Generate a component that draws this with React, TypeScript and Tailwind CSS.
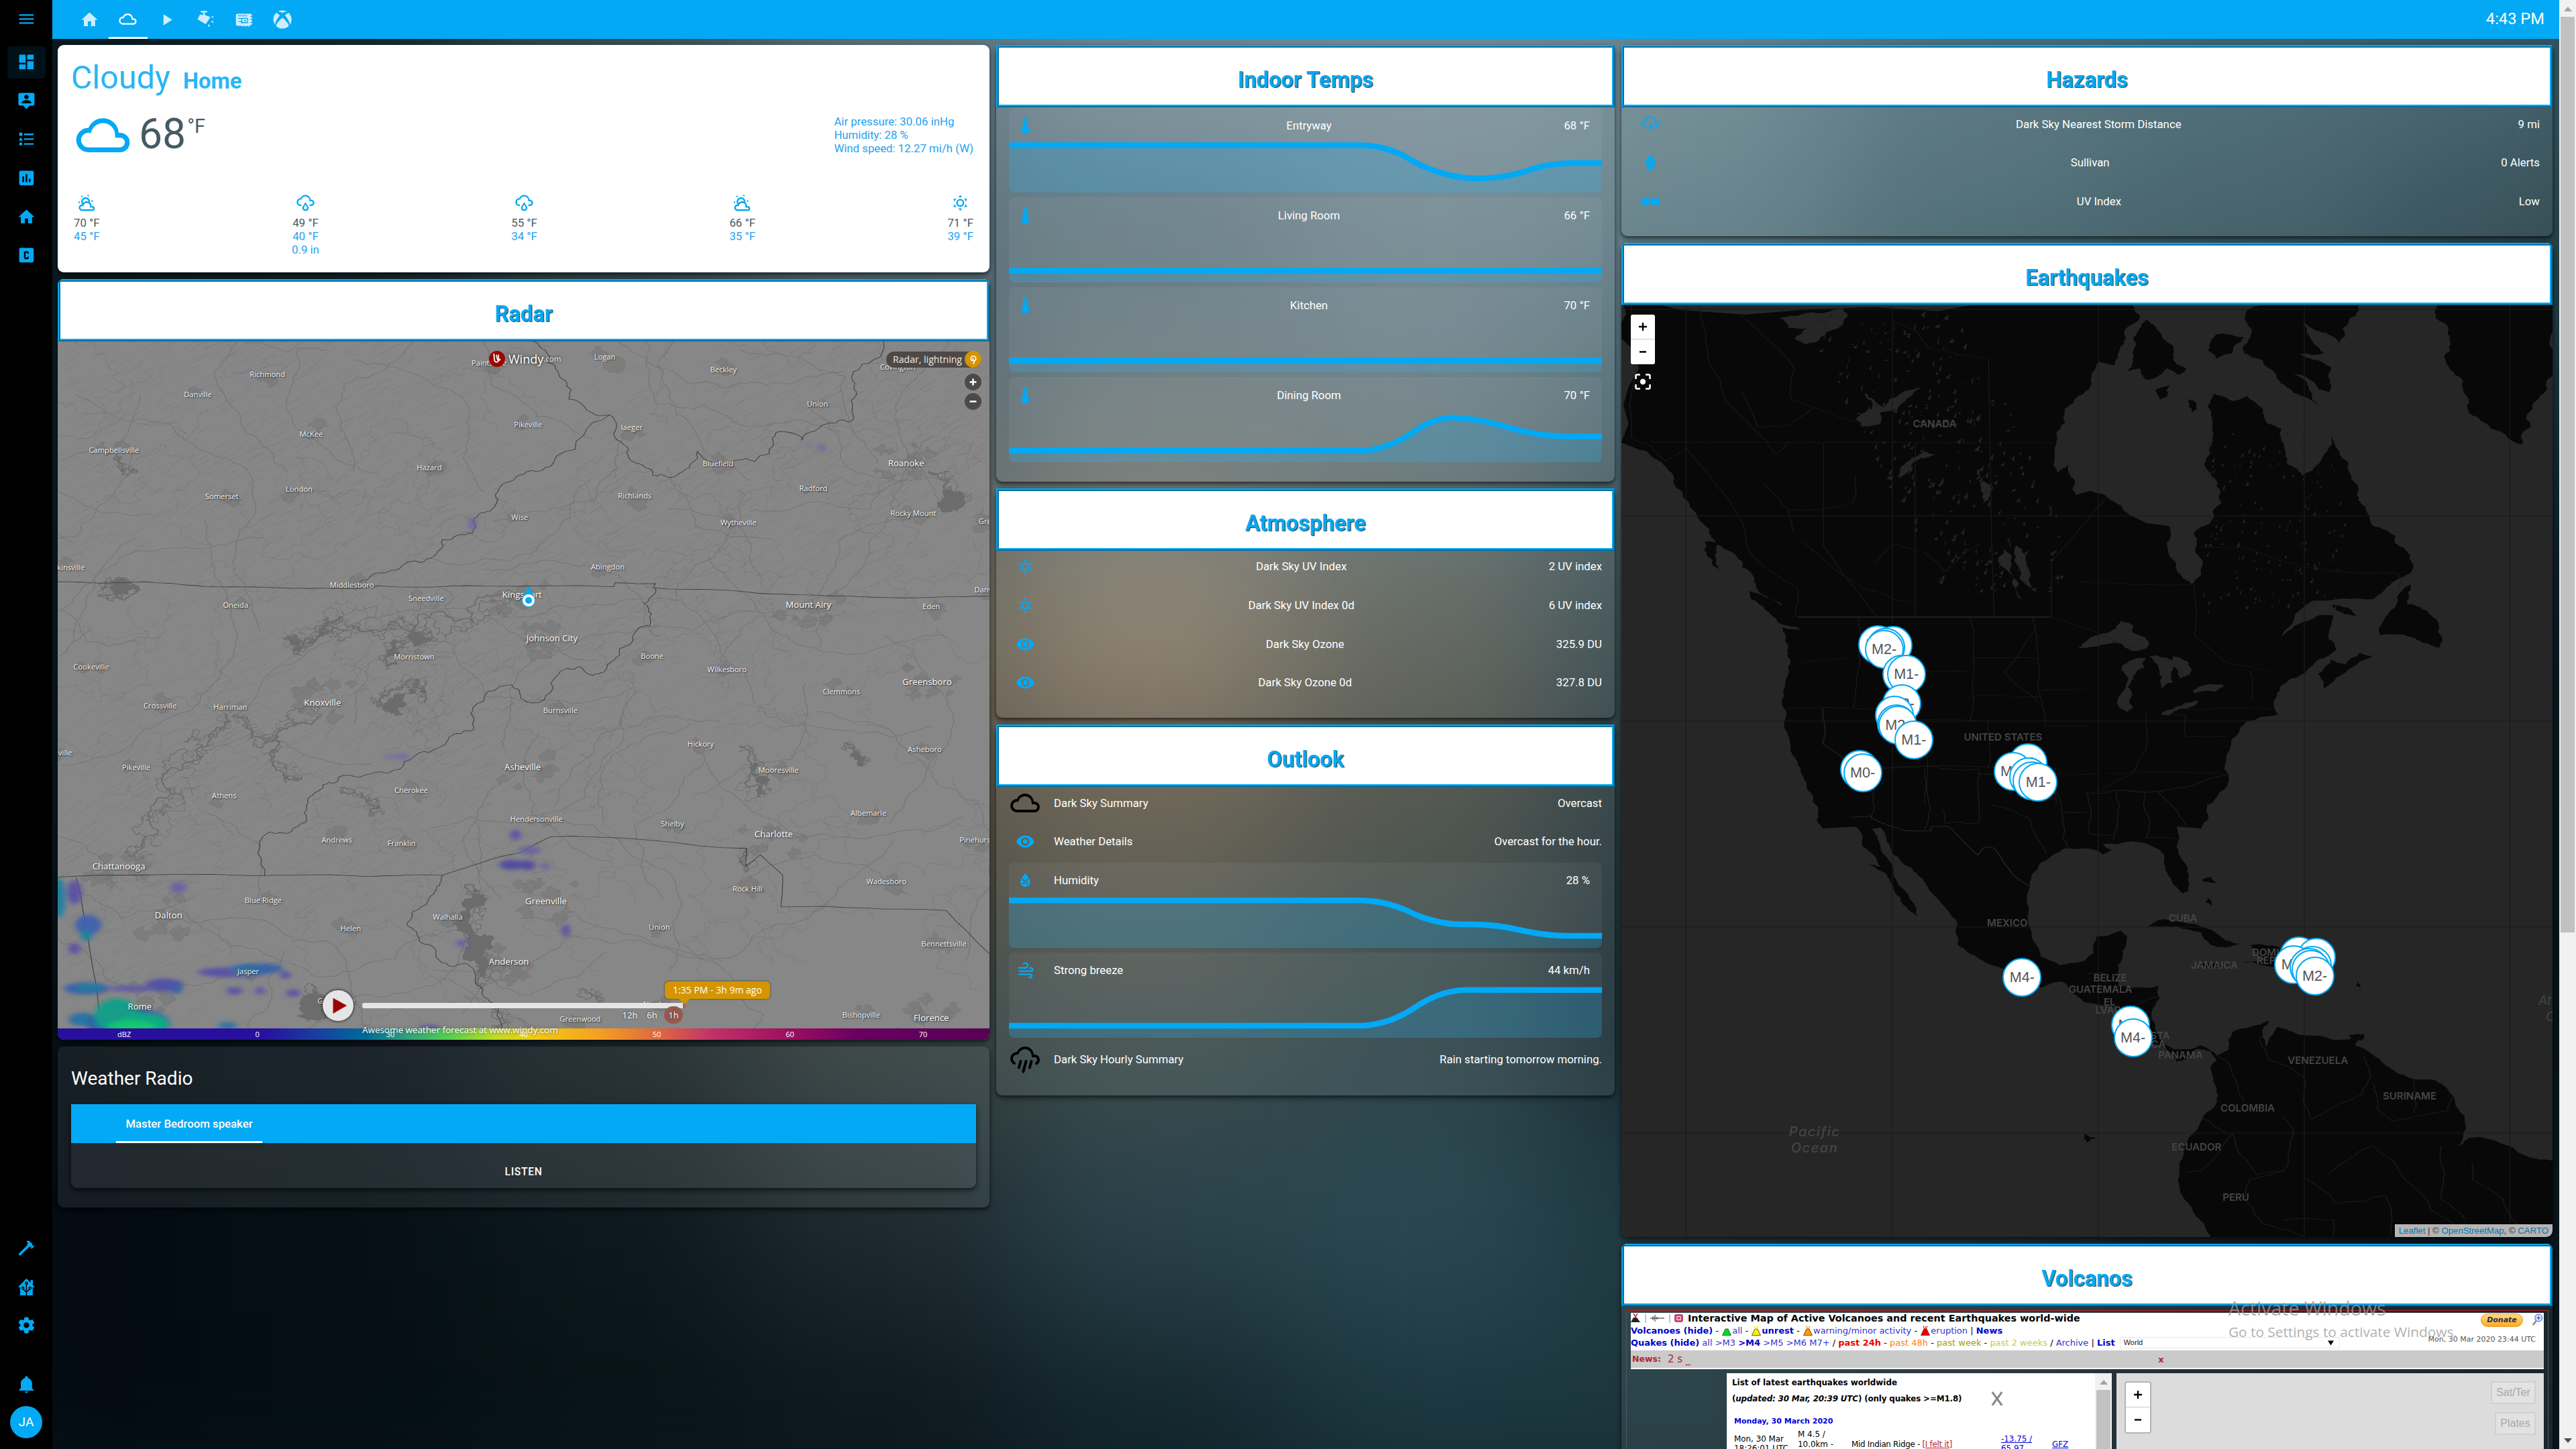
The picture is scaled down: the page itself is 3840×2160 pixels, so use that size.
import type { ReactNode } from "react";
import { FaXbox } from "react-icons/fa";

/* ---------- icon paths, 24 unit grid ---------- */
const CLOUD_OPEN =
  "M6,14A1,1 0 0,1 7,15A1,1 0 0,1 6,16A5,5 0 0,1 1,11A5,5 0 0,1 6,6C7,3.65 9.3,2 12,2C15.43,2 18.24,4.66 18.5,8.03L19,8A4,4 0 0,1 23,12A4,4 0 0,1 19,16H18A1,1 0 0,1 17,15A1,1 0 0,1 18,14H19A2,2 0 0,0 21,12A2,2 0 0,0 19,10H17V9A5,5 0 0,0 12,4C9.5,4 7.45,5.82 7.06,8.19C6.73,8.07 6.37,8 6,8A3,3 0 0,0 3,11A3,3 0 0,0 6,14";
const P = {
  menu: "M3,6H21V8H3V6M3,11H21V13H3V11M3,16H21V18H3V16Z",
  dash: "M13,3V9H21V3M13,21H21V11H13M3,21H11V15H3M3,13H11V3H3V13Z",
  person:
    "M20,2H4A2,2 0 0,0 2,4V16A2,2 0 0,0 4,18H8L12,22L16,18H20A2,2 0 0,0 22,16V4A2,2 0 0,0 20,2M12,4.3C13.5,4.3 14.7,5.5 14.7,7C14.7,8.5 13.5,9.7 12,9.7C10.5,9.7 9.3,8.5 9.3,7C9.3,5.5 10.5,4.3 12,4.3M18,15H6V14.1C6,12.1 10,11 12,11C14,11 18,12.1 18,14.1V15Z",
  list: "M5,9.5L7.5,14H2.5L5,9.5M3,4H7V8H3V4M5,20A2,2 0 0,0 7,18A2,2 0 0,0 5,16A2,2 0 0,0 3,18A2,2 0 0,0 5,20M9,5V7H21V5H9M9,19H21V17H9V19M9,13H21V11H9V13Z",
  chart:
    "M9 17H7V10H9V17M13 17H11V7H13V17M17 17H15V13H17V17M19 3H5A2 2 0 0 0 3 5V19A2 2 0 0 0 5 21H19A2 2 0 0 0 21 19V5A2 2 0 0 0 19 3Z",
  home: "M10,20V14H14V20H19V12H22L12,3L2,12H5V20H10Z",
  boxC: "M5,3H19A2,2 0 0,1 21,5V19A2,2 0 0,1 19,21H5A2,2 0 0,1 3,19V5A2,2 0 0,1 5,3M11,7A2,2 0 0,0 9,9V15A2,2 0 0,0 11,17H13A2,2 0 0,0 15,15V14H13V15H11V9H13V10H15V9A2,2 0 0,0 13,7H11Z",
  hammer:
    "M2,19.63L13.43,8.2L12.72,7.5L14.14,6.07L12,3.89C13.2,2.7 15.09,2.7 16.27,3.89L19.87,7.5L18.45,8.91H21.29L22,9.62L18.45,13.21L17.74,12.5V9.62L16.27,11.04L15.56,10.33L4.12,21.77L2,19.63Z",
  cog: "M12,15.5A3.5,3.5 0 0,1 8.5,12A3.5,3.5 0 0,1 12,8.5A3.5,3.5 0 0,1 15.5,12A3.5,3.5 0 0,1 12,15.5M19.43,12.97C19.47,12.65 19.5,12.33 19.5,12C19.5,11.67 19.47,11.34 19.43,11L21.54,9.37C21.73,9.22 21.78,8.95 21.66,8.73L19.66,5.27C19.54,5.05 19.27,4.96 19.05,5.05L16.56,6.05C16.04,5.66 15.5,5.32 14.87,5.07L14.5,2.42C14.46,2.18 14.25,2 14,2H10C9.75,2 9.54,2.18 9.5,2.42L9.13,5.07C8.5,5.32 7.96,5.66 7.44,6.05L4.95,5.05C4.73,4.96 4.46,5.05 4.34,5.27L2.34,8.73C2.21,8.95 2.27,9.22 2.46,9.37L4.57,11C4.53,11.34 4.5,11.67 4.5,12C4.5,12.33 4.53,12.65 4.57,12.97L2.46,14.63C2.27,14.78 2.21,15.05 2.34,15.27L4.34,18.73C4.46,18.95 4.73,19.03 4.95,18.95L7.44,17.94C7.96,18.34 8.5,18.68 9.13,18.93L9.5,21.58C9.54,21.82 9.75,22 10,22H14C14.25,22 14.46,21.82 14.5,21.58L14.87,18.93C15.5,18.67 16.04,18.34 16.56,17.94L19.05,18.95C19.27,19.03 19.54,18.95 19.66,18.73L21.66,15.27C21.78,15.05 21.73,14.78 21.54,14.63L19.43,12.97Z",
  bell: "M21,19V20H3V19L5,17V11C5,7.9 7.03,5.17 10,4.29C10,4.19 10,4.1 10,4A2,2 0 0,1 12,2A2,2 0 0,1 14,4C14,4.1 14,4.19 14,4.29C16.97,5.17 19,7.9 19,11V17L21,19M14,21A2,2 0 0,1 12,23A2,2 0 0,1 10,21",
  play: "M8,5.14V19.14L19,12.14L8,5.14Z",
  track:
    "M6,1H14V3H11V6L18,8.7L12.3,17.5L2,11.4L5,5.6L9,6V3H6V1M19.5,8L21.5,7.4L22,9L20,9.6L19.5,8M19.5,13.4L21.8,14.2L21.2,15.8L19,15L19.5,13.4M15,18.2L16.6,17.8L17.4,20.6L15.8,21L15,18.2Z",
  board:
    "M3.7,4.5H20.5A1.5,1.5 0 0,1 22,6V7.5H20.5V9H22.500V11H20.5V12.500H22.500V14.500H20.5V16H22.500V18H20.5V19.500H18.500V20.500H17V19.500H15V20.500H13.500V19.500H11.500V20.500H10V19.500H3.7A1.5,1.5 0 0,1 2.200,18V6A1.5,1.5 0 0,1 3.7,4.500M5,5.800V8H5.900V5.800H5M7,5.800V8H7.900V5.800H7M9,5.800V8H9.900V5.800H9M11,5.800V8H11.900V5.800H11M13,5.800V8H13.900V5.800H13M15,5.800V8H15.900V5.800H15M5,9.800V10.900H9V13.500H5.500V14.600H8.500V16.200H17.200V9.800H5M10.200,10.900H16.100V15.100H10.200V10.900M12.600,12V14H14.600V12H12.600Z",
  cloud:
    "M6,19A5,5 0 0,1 1,14A5,5 0 0,1 6,9C7,6.65 9.3,5 12,5C15.43,5 18.24,7.66 18.5,11.03L19,11A4,4 0 0,1 23,15A4,4 0 0,1 19,19H6M19,13H17V12A5,5 0 0,0 12,7C9.5,7 7.45,8.82 7.06,11.19C6.73,11.07 6.37,11 6,11A3,3 0 0,0 3,14A3,3 0 0,0 6,17H19A2,2 0 0,0 21,15A2,2 0 0,0 19,13Z",
  partly:
    "M12.74,5.47C15.1,6.5 16.35,9.03 15.92,11.46C17.19,12.56 18,14.19 18,16V16.17C18.31,16.06 18.65,16 19,16A3,3 0 0,1 22,19A3,3 0 0,1 19,22H6A4,4 0 0,1 2,18A4,4 0 0,1 6,14H6.27C5,12.45 4.6,10.24 5.5,8.26C6.72,5.5 9.97,4.24 12.74,5.47M11.93,7.3C10.16,6.5 8.09,7.31 7.31,9.07C6.85,10.09 6.93,11.22 7.41,12.13C8.5,10.83 10.16,10 12,10C12.7,10 13.38,10.12 14,10.34C13.94,9.06 13.18,7.86 11.93,7.3M13.55,3.64C13,3.4 12.45,3.23 11.88,3.12L14.37,1.82L15.27,4.71C14.76,4.29 14.19,3.93 13.55,3.64M6.09,4.44C5.6,4.79 5.17,5.19 4.8,5.63L4.91,2.82L7.87,3.5C7.25,3.71 6.65,4.03 6.09,4.44M18,9.71C17.91,9.12 17.78,8.55 17.59,8L19.97,9.5L17.92,11.73C18.03,11.08 18.05,10.4 18,9.71M3.04,11.3C3.11,11.9 3.24,12.47 3.43,13L1.06,11.5L3.1,9.28C3,9.93 2.97,10.61 3.04,11.3M19,18H16V16A4,4 0 0,0 12,12A4,4 0 0,0 8,16H6A2,2 0 0,0 4,18A2,2 0 0,0 6,20H19A1,1 0 0,0 20,19A1,1 0 0,0 19,18Z",
  rainy:
    CLOUD_OPEN +
    "M14.83,15.67C16.39,17.23 16.39,19.5 14.83,21.08C14.05,21.86 13,22 12,22C11,22 9.95,21.86 9.17,21.08C7.61,19.5 7.61,17.23 9.17,15.67L12,11L14.83,15.67M13.41,16.69L12,14.25L10.59,16.69C9.8,17.5 9.8,18.7 10.59,19.5C11,19.93 11.5,20 12,20C12.5,20 13,19.93 13.41,19.5C14.2,18.7 14.2,17.5 13.41,16.69Z",
  lightning: CLOUD_OPEN + "M12,11H15L13,15H15L11.25,22L12,17H9.5L12,11Z",
  sunny:
    "M12,7A5,5 0 0,1 17,12A5,5 0 0,1 12,17A5,5 0 0,1 7,12A5,5 0 0,1 12,7M12,9A3,3 0 0,0 9,12A3,3 0 0,0 12,15A3,3 0 0,0 15,12A3,3 0 0,0 12,9M12,2L14.39,5.42C13.65,5.15 12.84,5 12,5C11.16,5 10.35,5.15 9.61,5.42L12,2M3.34,7L7.5,6.65C6.9,7.16 6.36,7.78 5.94,8.5C5.5,9.24 5.25,10 5.11,10.79L3.34,7M3.36,17L5.12,13.23C5.26,14 5.53,14.78 5.95,15.5C6.37,16.24 6.91,16.86 7.5,17.37L3.36,17M20.65,7L18.88,10.79C18.74,10 18.47,9.23 18.05,8.5C17.63,7.78 17.1,7.15 16.5,6.64L20.65,7M20.64,17L16.5,17.36C17.09,16.85 17.62,16.22 18.04,15.5C18.46,14.77 18.73,14 18.87,13.21L20.64,17M12,22L9.59,18.56C10.33,18.83 11.14,19 12,19C12.82,19 13.63,18.83 14.37,18.56L12,22Z",
  pouring:
    "M9,12C9.53,12.14 9.85,12.69 9.71,13.22L8.41,18.05C8.27,18.59 7.72,18.9 7.19,18.76C6.65,18.62 6.34,18.07 6.5,17.54L7.78,12.71C7.92,12.17 8.47,11.86 9,12M13,12C13.53,12.14 13.85,12.69 13.71,13.22L11.64,20.95C11.5,21.5 10.95,21.8 10.41,21.66C9.88,21.5 9.56,20.97 9.7,20.43L11.78,12.71C11.92,12.17 12.47,11.86 13,12M17,12C17.53,12.14 17.85,12.69 17.71,13.22L16.41,18.05C16.27,18.59 15.72,18.9 15.19,18.76C14.65,18.62 14.34,18.07 14.5,17.54L15.78,12.71C15.92,12.17 16.47,11.86 17,12M17,10V9A5,5 0 0,0 12,4C9.5,4 7.45,5.82 7.06,8.19C6.73,8.07 6.37,8 6,8A3,3 0 0,0 3,11C3,12.11 3.6,13.08 4.5,13.6V13.59C5,13.87 5.14,14.5 4.87,14.96C4.59,15.43 4,15.6 3.5,15.32V15.33C2,14.47 1,12.85 1,11A5,5 0 0,1 6,6C7,3.65 9.3,2 12,2C15.43,2 18.24,4.66 18.5,8.03L19,8A4,4 0 0,1 23,12C23,13.5 22.2,14.77 21,15.46V15.46C20.5,15.73 19.91,15.57 19.63,15.09C19.36,14.61 19.5,14 20,13.72V13.73C20.6,13.39 21,12.74 21,12A2,2 0 0,0 19,10H17Z",
  windy:
    "M4,10A1,1 0 0,1 3,9A1,1 0 0,1 4,8H12A2,2 0 0,0 14,6A2,2 0 0,0 12,4C11.45,4 10.95,4.22 10.59,4.59C10.2,5 9.56,5 9.17,4.59C8.78,4.2 8.78,3.56 9.17,3.17C9.9,2.45 10.9,2 12,2A4,4 0 0,1 16,6A4,4 0 0,1 12,10H4M19,12A1,1 0 0,0 20,11A1,1 0 0,0 19,10C18.72,10 18.47,10.11 18.29,10.29C17.9,10.68 17.27,10.68 16.88,10.29C16.5,9.9 16.5,9.27 16.88,8.88C17.42,8.34 18.17,8 19,8A3,3 0 0,1 22,11A3,3 0 0,1 19,14H5A1,1 0 0,1 4,13A1,1 0 0,1 5,12H19M18,18H4A1,1 0 0,1 3,17A1,1 0 0,1 4,16H18A3,3 0 0,1 21,19A3,3 0 0,1 18,22C17.17,22 16.42,21.66 15.88,21.12C15.5,20.73 15.5,20.1 15.88,19.71C16.27,19.32 16.9,19.32 17.29,19.71C17.47,19.89 17.72,20 18,20A1,1 0 0,0 19,19A1,1 0 0,0 18,18Z",
  eye: "M12,9A3,3 0 0,0 9,12A3,3 0 0,0 12,15A3,3 0 0,0 15,12A3,3 0 0,0 12,9M12,17A5,5 0 0,1 7,12A5,5 0 0,1 12,7A5,5 0 0,1 17,12A5,5 0 0,1 12,17M12,4.5C7,4.5 2.73,7.61 1,12C2.73,16.39 7,19.5 12,19.5C17,19.5 21.27,16.39 23,12C21.27,7.61 17,4.5 12,4.5Z",
  thermo:
    "M15 13V5A3 3 0 0 0 9 5V13A5 5 0 1 0 15 13M12 4A1 1 0 0 1 13 5V8H11V5A1 1 0 0 1 12 4Z",
  water:
    "M12,3.25C12,3.25 6,10 6,14C6,17.32 8.69,20 12,20A6,6 0 0,0 18,14C18,10 12,3.25 12,3.25M14.47,9.97L15.53,11.03L9.53,17.03L8.47,15.97M9.75,10A1.25,1.25 0 0,1 11,11.25A1.25,1.25 0 0,1 9.75,12.5A1.25,1.25 0 0,1 8.5,11.25A1.25,1.25 0 0,1 9.75,10M14.25,14.5A1.25,1.25 0 0,1 15.5,15.75A1.25,1.25 0 0,1 14.25,17A1.25,1.25 0 0,1 13,15.75A1.25,1.25 0 0,1 14.25,14.5Z",
  hurricane:
    "M15,6.79C16.86,7.86 18,9.85 18,12C18,22 6,22 6,22C7.25,21.06 8.38,19.95 9.34,18.71C9.38,18.66 9.41,18.61 9.44,18.55C9.69,18.06 9.5,17.46 9,17.21C7.14,16.14 6,14.15 6,12C6,2 18,2 18,2C16.75,2.94 15.62,4.05 14.66,5.29C14.62,5.34 14.59,5.39 14.56,5.45C14.31,5.94 14.5,6.54 15,6.79M12,14A2,2 0 0,0 14,12A2,2 0 0,0 12,10A2,2 0 0,0 10,12A2,2 0 0,0 12,14Z",
  shades:
    "M7,17H4C2.38,17 0.96,15.74 0.76,14.14L0.26,11.15C0.15,10.3 0.39,9.5 0.91,8.92C1.43,8.34 2.19,8 3,8H9C9.83,8 10.58,8.35 11.06,8.96C11.17,9.11 11.27,9.27 11.35,9.45C11.78,9.36 12.22,9.36 12.64,9.45C12.72,9.27 12.82,9.11 12.94,8.96C13.41,8.35 14.16,8 15,8H21C21.81,8 22.57,8.34 23.09,8.92C23.6,9.5 23.84,10.3 23.74,11.11L23.23,14.18C23.04,15.74 21.61,17 20,17H17C15.44,17 13.92,15.81 13.54,14.3L12.64,11.59C12.26,11.31 11.73,11.31 11.35,11.59L10.43,14.37C10.07,15.82 8.56,17 7,17Z",
};
type IconName = keyof typeof P;

function Icon({ n, className = "size-[28.8px]" }: { n: IconName; className?: string }) {
  return (
    <svg viewBox="0 0 24 24" className={className} fill="currentColor" fillRule="evenodd">
      <path d={P[n]} />
    </svg>
  );
}

function HaIcon() {
  return (
    <svg viewBox="0 0 24 24" className="size-[28.8px]">
      <path fill="currentColor" d="M12 1.5 22.5 12.5H19.8V22.5H4.2V12.5H1.5Z" />
      <path fill="currentColor" d="M17 3.5H20V9H17Z" />
      <g stroke="#000" strokeWidth="1.2" fill="none">
        <path d="M12 22.5V8M12 18.5 7.5 14.5M12 18.5 16.5 14.5" />
        <circle cx="12" cy="7.5" r="1.4" />
        <circle cx="7.5" cy="13.5" r="1.4" />
        <circle cx="16.5" cy="13.5" r="1.4" />
      </g>
    </svg>
  );
}

/* ---------- procedural terrain helpers ---------- */
type Pt = [number, number];
function rng(seed: number) {
  let s = seed >>> 0;
  return () => {
    s = (s * 1664525 + 1013904223) >>> 0;
    return s / 4294967296;
  };
}
function parse(str: string): Pt[] {
  return str
    .trim()
    .split(/\s+/)
    .map((p) => p.split(",").map(Number) as Pt);
}
/** Midpoint displacement, turns a coarse outline into a ragged one. */
function jag(str: string, amp = 0.12, levels = 3, close = false, seed = 7) {
  const r = rng(seed);
  let pts = parse(str);
  if (close) pts = [...pts, pts[0]];
  for (let l = 0; l < levels; l++) {
    const out: Pt[] = [pts[0]];
    for (let i = 1; i < pts.length; i++) {
      const [x0, y0] = pts[i - 1];
      const [x1, y1] = pts[i];
      const k = (r() - 0.5) * 2 * amp;
      out.push([(x0 + x1) / 2 - (y1 - y0) * k, (y0 + y1) / 2 + (x1 - x0) * k], [x1, y1]);
    }
    pts = out;
  }
  return "M" + pts.map(([x, y]) => x.toFixed(1) + " " + y.toFixed(1)).join("L") + (close ? "Z" : "");
}

/* ---------- page background ---------- */
const BG = [
  ["#0a1a21", "#15272e", "#3b5058", "#5f7680", "#768e98", "#7c939d", "#6f8a93", "#55747f", "#476872", "#3f5f6a"],
  ["#0a1a21", "#12232a", "#33474e", "#4f6772", "#5c737e", "#6b818c", "#5f7c86", "#46666f", "#3a5963", "#2c4751"],
  ["#0a1920", "#12222a", "#2e3f44", "#4f6066", "#6a7678", "#65787e", "#46616a", "#2c4751", "#1d3640", "#142c36"],
  ["#091820", "#111f26", "#313c3e", "#625d50", "#887c69", "#5c6058", "#30464d", "#1c3139", "#122229", "#0a1a22"],
  ["#08161d", "#0e1b22", "#222d32", "#4a463b", "#5f5747", "#454942", "#20333a", "#14262d", "#0c1a21", "#08151c"],
  ["#060f16", "#0c151c", "#1b2429", "#33403f", "#3f4e4d", "#2f4549", "#16282f", "#102127", "#0b181f", "#07131a"],
  ["#040b12", "#050f15", "#0c181d", "#1e2a2f", "#2a424b", "#2b4852", "#1e373f", "#1c3138", "#131f27", "#0a151d"],
  ["#040b12", "#040e14", "#081318", "#0d181e", "#14262d", "#1c3740", "#1d373e", "#1b2d33", "#121b23", "#0a151d"],
];

function Backdrop() {
  return (
    <div className="absolute inset-0 overflow-hidden bg-[#0a1a21]">
      <div className="absolute -inset-[100px] grid grid-cols-10 grid-rows-8 blur-[110px]">
        {BG.flat().map((c, i) => (
          <div key={i} style={{ backgroundColor: c }} />
        ))}
      </div>
    </div>
  );
}

/* ---------- shared card parts ---------- */
const SHADOW = "shadow-[0_4px_8px_rgba(0,0,0,0.45),0_2px_4px_rgba(0,0,0,0.3)]";

function Card({ className = "", children }: { className?: string; children: ReactNode }) {
  return <section className={`flex shrink-0 flex-col rounded-[9px] bg-white/[0.07] ${SHADOW} ${className}`}>{children}</section>;
}

function Heading({ children }: { children: ReactNode }) {
  return (
    <h2 className="flex h-[93px] w-full shrink-0 items-center justify-center border-4 border-[#03a9f4] bg-white pt-[12px] text-[32.65px] leading-none font-bold text-[#03a9f4] [border-style:ridge] [text-shadow:1px_1px_1px_#1f3a4a]">
      {children}
    </h2>
  );
}

function Row({ icon, name, value, left, big, inset }: { icon: IconName; name: string; value: string; left?: boolean; big?: boolean; inset?: boolean }) {
  return (
    <div className={`flex h-12 items-center text-[16.8px] leading-none text-white ${inset ? "pr-[18px]" : ""}`}>
      <div className={`flex w-12 justify-center ${big ? "text-black" : "text-[#03a9f4]"}`}>
        <Icon n={icon} className={big ? "size-12 shrink-0" : "size-[28.8px]"} />
      </div>
      <div className={`ml-[19px] flex-1 ${left ? "text-left" : "text-center"}`}>{name}</div>
      <div>{value}</div>
    </div>
  );
}

function GraphCard({ d, ...row }: { d: string; icon: IconName; name: string; value: string; left?: boolean }) {
  return (
    <div className="relative h-[127px] overflow-hidden rounded-[8px] bg-white/[0.05]">
      <svg viewBox="0 0 884 127" className="absolute inset-0 size-full">
        <path d={`${d}V127H0Z`} fill="#03a9f4" fillOpacity="0.2" />
        <path d={d} fill="none" stroke="#03a9f4" strokeWidth="8.6" />
      </svg>
      <div className="relative pt-[3px]">
        <Row {...row} inset />
      </div>
    </div>
  );
}

/* ---------- sidebar and header ---------- */
function Sidebar() {
  const top: IconName[] = ["dash", "person", "list", "chart", "home", "boxC"];
  return (
    <aside className="relative flex w-[78px] shrink-0 flex-col items-center bg-black text-[#03a9f4]">
      <div className="flex h-[57.6px] items-center">
        <Icon n="menu" />
      </div>
      <nav className="mt-[11px] flex flex-col gap-[9.6px]">
        {top.map((n, i) => (
          <div key={n} className={`flex h-12 w-[57px] items-center justify-center rounded-[5px] ${i === 0 ? "bg-[#00111a]" : ""}`}>
            <Icon n={n} />
          </div>
        ))}
      </nav>
      <div className="mt-auto flex flex-col items-center pb-[16px]">
        <div className="flex h-[57.6px] items-center">
          <Icon n="hammer" />
        </div>
        <div className="flex h-[57.6px] items-center">
          <HaIcon />
        </div>
        <div className="flex h-[57.6px] items-center">
          <Icon n="cog" />
        </div>
        <div className="mt-[30px] flex h-[57.6px] items-center">
          <Icon n="bell" />
        </div>
        <div className="mt-[4px] flex size-12 items-center justify-center rounded-full bg-[#03a9f4] text-[19.2px] text-white">JA</div>
      </div>
    </aside>
  );
}

function Header() {
  const tabs: IconName[] = ["home", "cloud", "play", "track", "board"];
  return (
    <header className="flex h-[58px] shrink-0 items-center bg-[#03a9f4] pr-[22px] pl-[26.5px] text-white">
      {tabs.map((n, i) => (
        <div key={n} className={`flex h-full w-[57.6px] items-center justify-center ${i === 1 ? "border-b-[3px] border-white pt-[2px]" : "text-white/80"}`}>
          <Icon n={n} />
        </div>
      ))}
      <div className="flex h-full w-[57.6px] items-center justify-center text-white/80">
        <FaXbox className="size-[28px]" />
      </div>
      <div className="ml-auto text-[23.7px] leading-none">4:43 PM</div>
    </header>
  );
}

/* ---------- column one ---------- */
const DAYS: { icon: IconName; hi: string; lo: string; rain?: string }[] = [
  { icon: "partly", hi: "70 °F", lo: "45 °F" },
  { icon: "rainy", hi: "49 °F", lo: "40 °F", rain: "0.9 in" },
  { icon: "rainy", hi: "55 °F", lo: "34 °F" },
  { icon: "partly", hi: "66 °F", lo: "35 °F" },
  { icon: "sunny", hi: "71 °F", lo: "39 °F" },
];

function WeatherCard() {
  return (
    <section className={`flex h-[339px] shrink-0 flex-col rounded-[9px] bg-white pr-[24px] pl-[24px] ${SHADOW}`}>
      <div className="-ml-[4px] flex items-baseline pt-[20px] leading-[58px] text-[#29b6f6]">
        <span className="text-[48.5px]">Cloudy</span>
        <span className="ml-[19px] text-[32.6px] font-bold">Home</span>
      </div>
      <div className="mt-[17px] flex h-[74px]">
        <Icon n="cloud" className="-mt-[9px] size-[87px] shrink-0 text-[#03a9f4]" />
        <div className="ml-[10px] flex text-[#455a64]">
          <span className="text-[62.4px] leading-[66px]">68</span>
          <span className="ml-[2px] text-[28.8px] leading-[42px]">°F</span>
        </div>
        <div className="ml-auto pt-[4px] text-[16.8px] leading-[20px] text-[#1fa2f0]">
          <div>Air pressure: 30.06 inHg</div>
          <div>Humidity: 28 %</div>
          <div>Wind speed: 12.27 mi/h (W)</div>
        </div>
      </div>
      <div className="mt-[47px] flex justify-between text-[16.8px] leading-[20px] text-[#1fa2f0]">
        {DAYS.map((d, i) => (
          <div key={i} className="flex flex-col items-center">
            <Icon n={d.icon} className="mb-[5px] size-[28.8px] text-[#03a9f4]" />
            <span className="text-[#455a64]">{d.hi}</span>
            <span>{d.lo}</span>
            {d.rain && <span>{d.rain}</span>}
          </div>
        ))}
      </div>
    </section>
  );
}

const CITIES: [string, number, number, number?][] = [
  ["Richmond", 357, 86], ["Danville", 241, 130], ["McKee", 430, 217], ["Campbellsville", 101, 252], ["London", 410, 339],
  ["Somerset", 281, 355], ["Hazard", 627, 291], ["Paintsville", 727, 60], ["Logan", 920, 47], ["Beckley", 1118, 75],
  ["Covington", 1409, 69], ["Union", 1275, 151], ["Pikeville", 792, 197], ["Iaeger", 965, 203], ["Bluefield", 1109, 283],
  ["Roanoke", 1423, 282, 1], ["Radford", 1268, 337], ["Richlands", 970, 353], ["Wise", 778, 401], ["Wytheville", 1143, 412],
  ["Rocky Mount", 1435, 392], ["Abingdon", 925, 510], ["Middlesboro", 498, 550], ["Sneedville", 622, 580], ["Oneida", 304, 595],
  ["Kingsport", 782, 572, 1], ["Mount Airy", 1260, 594, 1], ["Eden", 1465, 598], ["Johnson City", 832, 668, 1], ["Morristown", 602, 709],
  ["Boone", 999, 707], ["Cookeville", 63, 730], ["Wilkesboro", 1124, 736], ["Greensboro", 1458, 764, 1], ["Clemmons", 1315, 785],
  ["Crossville", 178, 816], ["Harriman", 295, 820], ["Knoxville", 449, 810, 1], ["Burnsville", 846, 827], ["Hickory", 1080, 900],
  ["Asheboro", 1454, 912], ["Pikeville", 138, 952], ["Asheville", 783, 952, 1], ["Mooresville", 1210, 959], ["Cherokee", 597, 1003],
  ["Athens", 285, 1015], ["Albemarle", 1360, 1053], ["Hendersonville", 806, 1066], ["Shelby", 1033, 1076], ["Charlotte", 1202, 1101, 1],
  ["Andrews", 473, 1112], ["Franklin", 581, 1119], ["Chattanooga", 109, 1172, 1], ["Wadesboro", 1390, 1204], ["Rock Hill", 1158, 1220],
  ["Blue Ridge", 350, 1245], ["Greenville", 822, 1248, 1], ["Dalton", 192, 1280, 1], ["Walhalla", 658, 1283], ["Helen", 496, 1308],
  ["Union", 1011, 1304], ["Bennettsville", 1486, 1342], ["Anderson", 760, 1382, 1], ["Jasper", 325, 1402], ["Rome", 144, 1481, 1],
  ["Gainesville", 472, 1467], ["Newberry", 1013, 1475], ["Greenwood", 879, 1507], ["Bishopville", 1348, 1498], ["Florence", 1465, 1505, 1],
  ["Hopkinsville", 17, 512], ["McMinnville", -4, 920], ["Danville", 1560, 560], ["Gretna", 1564, 410], ["Pinehurst", 1540, 1112],
];

const BORDERS = [
  "7,543 80,546 150,543 220,550 350,555 510,557 545,552 780,553 935,554 937,545 1005,547 1000,556 1200,570 1370,577 1562,575",
  "510,545 560,520 590,500 640,480 650,450 700,435 715,390 740,370 745,335 790,300 840,265 928,175",
  "928,175 860,140 855,100 825,60 800,13",
  "928,175 940,230 960,270 1000,308 1050,300 1075,255 1090,275 1140,275 1195,260 1205,215 1250,230 1290,195 1330,190 1340,130 1335,80 1385,13",
  "1005,555 985,590 995,640 970,655 945,690 920,740 900,750 880,730 840,750 800,810 780,800 765,770 700,820 700,870 660,885 640,910 585,940 555,965 485,970 450,990 425,1030 420,1075 395,1095 360,1095 352,1192",
  "7,1194 525,1193 650,1190 730,1155 780,1140 830,1105 1157,1131 1155,1170 1180,1145 1217,1190 1214,1260 1490,1268 1562,1363",
  "650,1190 640,1215 600,1270 590,1300 610,1335 630,1345 660,1390 700,1395 720,1460 740,1500 745,1553",
  "38,1196 78,1528",
];
const RIVERS = [
  "80,560 100,540 130,545 145,560 110,580 75,575", "385,670 410,690 450,660 480,620 440,640", "400,700 440,665 500,640 560,635 600,650 700,630 760,560",
  "540,820 570,780 610,760 620,810", "555,730 585,680 630,650", "290,835 260,880 230,940 190,1000 160,1060 150,1110 130,1150",
  "300,840 330,880 370,890 365,940 385,975 415,975", "370,890 400,860 440,840", "480,1010 520,1020 545,1040 530,1060", "690,1210 695,1260 700,1320 720,1380 715,1440",
  "1145,905 1165,950 1185,1010", "1320,900 1340,930 1360,940", "1155,1130 1145,1160 1160,1180", "1460,300 1500,350 1520,370", "100,270 115,300 140,300",
  "740,1480 745,1553", "430,1430 425,1500", "880,1440 905,1480",
];
/* reservoirs that show as solid dark patches */
const POOLS = [
  "400,660 412,690 402,705 392,670", "560,800 590,790 622,760 618,790 590,812 560,830 545,815", "585,670 605,655 632,660 600,680 570,715 555,740 560,705",
  "1165,950 1178,945 1192,985 1190,1010 1180,1018 1172,985", "690,1270 702,1220 706,1260 700,1310 712,1370 722,1400 712,1440 704,1400 690,1330",
  "1480,345 1505,345 1522,368 1500,388 1482,362", "412,1480 440,1440 450,1480 425,1515", "1330,930 1345,920 1350,950", "95,560 110,535 135,548 120,572",
];
const BLOBS: [number, number, number, number, string][] = [
  [8, 1240, 12, 44, "#1f7fa0"], [35, 1228, 12, 26, "#5a4fa8"], [58, 1300, 22, 22, "#3f5fae"], [55, 1322, 10, 14, "#2080a0"], [35, 1352, 10, 12, "#5a4fa8"],
  [208, 1217, 14, 12, "#6a60a8"], [300, 1404, 60, 11, "#574fa8"], [340, 1396, 44, 11, "#3460ac"], [322, 1402, 26, 6, "#1f80a0"], [387, 1410, 10, 8, "#5a4fa8"],
  [185, 1432, 32, 14, "#514fa8"], [205, 1440, 10, 12, "#3a60a8"], [55, 1440, 38, 13, "#3460a8"], [60, 1438, 22, 7, "#1f80a0"], [130, 1440, 40, 7, "#6058a8"],
  [302, 1445, 14, 8, "#5a4fa8"], [345, 1445, 10, 8, "#6058a8"], [400, 1450, 12, 8, "#5a4fa8"], [125, 1518, 70, 36, "#2a62a8"], [106, 1500, 38, 38, "#12a088"],
  [150, 1520, 42, 24, "#10b080"], [130, 1525, 40, 14, "#18c86c"], [48, 1508, 22, 14, "#2a62a8"], [46, 1508, 12, 8, "#1f80a0"], [290, 1522, 16, 8, "#2a70a8"], [583, 928, 10, 6, "#6058a8"],
  [571, 928, 24, 5, "#7770a0"], [771, 1101, 9, 11, "#5a4fa8"], [765, 1167, 22, 11, "#5048a0"], [792, 1168, 12, 11, "#5048a0"], [820, 1170, 8, 8, "#6a62a0"],
  [795, 1135, 18, 10, "#6a62a0"], [855, 1312, 7, 14, "#5a50a0"], [680, 1340, 8, 8, "#6058a8"], [628, 1527, 18, 6, "#5a4fa8"], [699, 415, 6, 14, "#6a62a0"],
  [1282, 247, 6, 8, "#6a62a0"], [1260, 243, 8, 4, "#7770a0"],
];

function terrain() {
  const r = rng(42);
  let ridges = "";
  for (let i = 0; i < 9000; i++) {
    const x = 7 + r() * 1555;
    const y = 13 + r() * 1515;
    // the mountain belt runs from the lower left to the upper right
    const belt = Math.abs(y - (1250 - x * 0.72));
    if (belt > 420 * (0.4 + r() * 0.9) && !(x < 700 && y < 600 && r() < 0.8)) continue;
    const l = 6 + r() * 20;
    ridges += `M${x.toFixed(0)} ${y.toFixed(0)}q${(l * 0.4).toFixed(1)} ${(-l * 0.2 - r() * 4).toFixed(1)} ${l.toFixed(1)} ${(-l * (0.5 + r() * 0.5)).toFixed(1)}`;
  }
  const roads: string[] = [];
  const counties: string[] = [];
  for (let i = 0; i < 64; i++) {
    const x = 20 + r() * 1520;
    const y = 20 + r() * 1500;
    const a = r() * 6.28;
    const l = 120 + r() * 240;
    roads.push(jag(`${x},${y} ${x + Math.cos(a) * l},${y + Math.sin(a) * l} ${x + Math.cos(a + 0.5) * l * 1.8},${y + Math.sin(a + 0.5) * l * 1.8}`, 0.14, 5, false, i + 3));
  }
  for (let i = 0; i < 110; i++) {
    const x = r() * 1560;
    const y = r() * 1540;
    const a = r() * 6.28;
    const l = 60 + r() * 110;
    counties.push(jag(`${x},${y} ${x + Math.cos(a) * l},${y + Math.sin(a) * l} ${x + Math.cos(a + 0.9) * l * 1.6},${y + Math.sin(a + 0.9) * l * 1.6}`, 0.4, 5, false, i + 300));
  }
  let towns = "";
  for (const [, x, y, big] of CITIES) {
    const n = big ? 9 : 2;
    for (let k = 0; k < n; k++) {
      const cx = x + (r() - 0.5) * (big ? 100 : 34);
      const cy = y + (r() - 0.5) * (big ? 90 : 34);
      const s = 6 + r() * 12;
      towns += jag(`${cx - s},${cy} ${cx},${cy - s} ${cx + s},${cy} ${cx},${cy + s}`, 0.35, 3, true, Math.floor(cx));
    }
  }
  return { ridges, roads: roads.join(""), counties: counties.join(""), towns };
}
const TERRAIN = terrain();
const pctX = (x: number) => `${((x - 7) / 1555) * 100}%`;
const pctY = (y: number) => `${((y - 13) / 1540) * 100}%`;

function RadarMap() {
  return (
    <div className="relative flex-1 overflow-hidden rounded-b-[9px] bg-[#878787] font-['Open_Sans',sans-serif] text-white">
      <svg viewBox="7 13 1555 1540" preserveAspectRatio="none" className="absolute inset-0 size-full" fill="none">
        <defs>
          <filter id="soft" x="-50%" y="-50%" width="200%" height="200%">
            <feGaussianBlur stdDeviation="5" />
          </filter>
        </defs>
        <path d={TERRAIN.ridges} stroke="#777" strokeWidth="1" strokeOpacity="0.6" />
        <path d={TERRAIN.towns} fill="#7d7d7d" stroke="#6f6f6f" strokeWidth="0.6" />
        <path d={TERRAIN.counties} stroke="#6e6e6e" strokeWidth="0.8" strokeOpacity="0.8" />
        <path d={TERRAIN.roads} stroke="#757575" strokeWidth="1.4" />
        {RIVERS.map((s, i) => (
          <g key={i} stroke="#6a6a6a">
            <path d={jag(s, 0.35, 4, false, i + 20)} strokeWidth="2.2" />
            <path d={jag(s, 0.6, 5, false, i + 90)} strokeWidth="1.4" />
            <path d={jag(s, 0.7, 5, false, i + 140)} strokeWidth="1" />
          </g>
        ))}
        {POOLS.map((s, i) => (
          <path key={i} d={jag(s, 0.45, 4, true, i + 60)} fill="#6c6c6c" />
        ))}
        {BORDERS.map((s, i) => (
          <path key={i} d={jag(s, [0, 5, 7].includes(i) ? 0.02 : 0.2, 3, false, i + 5)} stroke="#3c3c3c" strokeWidth="1.2" />
        ))}
        <g filter="url(#soft)">
          {BLOBS.map(([x, y, rx, ry, c], i) => (
            <ellipse key={i} cx={x} cy={y} rx={rx} ry={ry} fill={c} fillOpacity="0.95" />
          ))}
        </g>
      </svg>
      <div className="absolute inset-0 leading-none [text-shadow:1px_1px_2px_#222]">
        {CITIES.map(([n, x, y, big], i) => (
          <span
            key={i}
            className={`absolute -translate-x-1/2 -translate-y-1/2 whitespace-nowrap ${big ? "text-[13.2px] text-white" : "text-[11.2px] text-white/95"}`}
            style={{ left: pctX(x), top: pctY(y) }}
          >
            {n}
          </span>
        ))}
      </div>

      <div className="absolute top-[13px] left-[643px] flex items-center [text-shadow:0_0_4px_#000]">
        <svg viewBox="0 0 24 24" className="size-[24px]">
          <circle cx="12" cy="12" r="12" fill="#9d0300" />
          <path d="M7 5c1.5 3 0 7 1.5 10 1 2 3.5 2.5 5 .5 1.5-2.5.5-6 .5-9M11 6.5c1 3 .5 5 2 7 1.500 1.500 3 .5 3.500-1" fill="none" stroke="#fff" strokeWidth="1.8" strokeLinecap="round" />
        </svg>
        <span className="ml-[5px] text-[18px] leading-[26px] font-medium">Windy</span>
        <span className="text-[11.5px] leading-[26px] text-white/90">.com</span>
      </div>
      <div className="absolute top-[15px] right-[12px] flex h-[24px] items-center rounded-full bg-[#4d4949] pl-[10px] text-[14.1px] leading-none text-[#f0ece0]">
        <span className="mr-[4px]">Radar, lightning</span>
        <span className="flex size-[25px] items-center justify-center rounded-full bg-[#d49500]">
          <svg viewBox="0 0 24 24" className="size-[18px]" fill="none" stroke="#fff" strokeWidth="2.2">
            <path d="M9 14a5 5 0 1 1 6 0M12 9l-2 5h4l-2 7" />
          </svg>
        </span>
      </div>
      <div className="absolute top-[48px] right-[12px] flex flex-col gap-[4px] text-white">
        {["M12 5V19M5 12H19", "M5 12H19"].map((d) => (
          <svg key={d} viewBox="0 0 24 24" className="size-[25px] rounded-full bg-[#4d4949] p-[4px]" stroke="currentColor" strokeWidth="3.5">
            <path d={d} />
          </svg>
        ))}
      </div>

      <svg viewBox="0 0 24 36" className="absolute h-[36px] w-[24px] -translate-x-1/2 -translate-y-1/2" style={{ left: pctX(793), top: pctY(576) }}>
        <path d="M12 2 20 16H4Z" fill="#03a9f4" />
        <circle cx="12" cy="23" r="9.5" fill="#fff" stroke="#03a9f4" strokeWidth="1" />
        <circle cx="12" cy="23" r="5" fill="#03a9f4" />
      </svg>

      <div className="absolute inset-x-0 bottom-0 h-[17px] bg-[linear-gradient(90deg,#280f9e_0%,#280f9e_22%,#1a3fa0_28%,#006a9a_33%,#2a9d80_37%,#55d050_42%,#c0dc20_47%,#f0cc10_51%,#f5a020_58%,#d85a4a_66%,#c03468_70%,#a01060_78%,#680060_86%,#580055_100%)] text-[11px] leading-[17px]">
        {["dBZ", "0", "30", "40", "50", "60", "70"].map((t, i) => (
          <span key={t} className="absolute -translate-x-1/2" style={{ left: pctX(118 + i * 222.2) }}>
            {t}
          </span>
        ))}
      </div>
      <div className="absolute bottom-[28px] left-[395px] flex size-[46px] items-center justify-center rounded-full bg-[#e5e5e5] shadow-[0_0_4px_#000]">
        <svg viewBox="0 0 24 24" className="size-[30px]">
          <path d="M6 3 22.5 12 6 21.5Z" fill="#9d0000" />
        </svg>
      </div>
      <div className="absolute bottom-[47px] left-[454px] h-[8px] w-[482px] rounded-[3px] border-r-4 border-[#b0604c] bg-[#e5e5e5]" />
      <div className="absolute bottom-[61px] left-[905px] flex h-[26px] w-[157px] items-center justify-center rounded-[6px] bg-[#d49500] text-[14px] leading-none shadow-[0_0_3px_#333]">
        1:35 PM - 3h 9m ago
        <span className="absolute top-full left-[21px] border-x-[8px] border-t-[8px] border-x-transparent border-t-[#d49500]" />
      </div>
      <div className="absolute bottom-[24px] left-[838px] flex items-center gap-[8px] text-[13px] leading-[20px] [text-shadow:0_0_3px_#333]">
        <span className="w-[30px] text-center">12h</span>
        <span className="w-[20px] text-center">6h</span>
        <span className="w-[28px] rounded-full bg-[#96594d] text-center leading-[26px]">1h</span>
      </div>
      <div className="absolute bottom-[5px] left-[454px] text-[13.45px] leading-[20px] whitespace-nowrap [text-shadow:0_0_4px_#444]">Awesome weather forecast at www.windy.com</div>
    </div>
  );
}

function RadioCard() {
  return (
    <Card className="h-[240px] px-[20px]">
      <div className="pt-[29px] text-[28px] leading-[38px] text-white">Weather Radio</div>
      <div className={`mt-[19px] flex h-[125px] flex-col overflow-hidden rounded-b-[9px] bg-white/[0.05] ${SHADOW}`}>
        <div className="h-[58px] bg-[#03a9f4] pl-[67px]">
          <div className="flex h-full w-[218px] items-center justify-center border-b-[3px] border-white pt-[4px] text-[16.8px] leading-none font-medium text-white">
            Master Bedroom speaker
          </div>
        </div>
        <div className="flex flex-1 items-center justify-center pt-[22px] text-[15.6px] leading-none font-medium tracking-[0.7px] text-white">LISTEN</div>
      </div>
    </Card>
  );
}

/* ---------- column three ---------- */
const NORTH_LAND =
  "19,0 19,452 35,465 60,480 80,510 100,545 115,600 130,650 150,700 165,745 185,780 205,800 235,870 240,905 270,940 300,990 310,1030 280,1020 285,1060 288,1110 285,1200 283,1330 293,1400 310,1460 320,1510 335,1568 345,1640 960,1640 970,1568 990,1520 1005,1480 1000,1420 1008,1370 1035,1310 1085,1290 1078,1250 1090,1200 1120,1170 1145,1130 1180,1090 1170,1020 1175,985 1150,985 1120,1010 1070,1075 1100,1025 1140,940 1240,935 1260,900 1290,865 1302,850 1300,800 1280,770 1275,740 1240,710 1230,670 1215,630 1215,590 1200,540 1185,490 1172,430 1165,480 1150,520 1125,555 1100,520 1095,460 1090,410 1065,390 1060,350 1035,310 1010,325 980,303 970,340 978,400 978,450 965,520 985,570 993,640 975,700 948,732 955,800 960,860 945,890 930,870 915,815 908,710 870,700 840,670 810,625 780,602 757,615 755,570 745,520 728,545 722,500 725,430 738,350 760,310 782,270 782,250 795,205 820,215 835,150 835,110 860,60 840,0";
const NORTH_ISLES = [
  "870,75 895,120 915,160 915,200 935,225 925,245 905,225 870,260 860,225 838,235 850,190 850,130",
  "1090,0 1040,40 1030,70 1040,130 1030,180 1060,200 1085,260 1110,300 1150,340 1140,300 1110,240 1150,290 1168,300 1170,220 1150,200 1120,180 1160,180 1140,140 1125,80 1150,110 1185,150 1190,100 1215,50 1215,0",
  "985,120 1030,130 1010,180 985,195 970,170",
  "885,295 910,275 905,310 890,325",
  "940,320 952,330 945,365",
  "1335,0 1340,70 1365,150 1365,230 1385,290 1400,370 1430,410 1455,430 1480,460 1495,400 1500,330 1520,270 1540,200 1540,0",
  "1250,1045 1275,960 1303,880 1295,950 1330,980 1345,1030 1345,1085 1310,1060 1290,1045",
  "1173,952 1195,960 1212,985 1190,978",
  "225,910 255,930 290,970 305,1020 285,1015 250,960 230,935",
  "155,757 175,760 170,800 182,855 165,810",
  "1150,1165 1160,1210 1190,1165 1238,1110 1218,1100 1195,1135 1170,1120",
];
const LAKES = [
  "760,1085 800,1040 830,1000 850,1015 850,1040 870,1055 873,1085 850,1095 830,1070 790,1080",
  "830,1150 850,1120 870,1115 850,1170 845,1240 840,1285 828,1270",
  "875,1110 905,1115 915,1130 915,1190 895,1210 890,1140",
  "915,1110 940,1130 942,1165 925,1180 912,1140",
  "895,1290 920,1265 955,1245 945,1265 910,1290",
  "945,1215 975,1195 1000,1200 985,1220 950,1225",
  "660,770 675,800 695,920 685,900 665,840",
  "640,780 650,850 668,935 662,880",
  "465,560 490,500 510,480 530,490 505,500 480,550",
  "400,380 425,350 415,300 445,345 475,300 505,285 490,310 440,360 440,395 410,405",
  "275,70 310,60 380,30 380,80 350,120 320,150 300,135 320,100 290,100",
  "595,530 602,560 592,580",
  "605,570 618,590 606,640 602,600",
  "915,800 930,815 920,820",
];
const NORTH_LINES = [
  "65,452 722,454", "347,454 347,770 380,860 435,990", "496,454 496,990", "615,195 617,454 620,760 624,990", "717,820 717,990", "717,820 805,625",
  "35,30 35,440 65,460 90,510 125,470 200,650 230,800 305,900 300,990", "460,80 500,115 520,165 610,195", "145,30 160,200 190,330 270,490 290,450",
  "210,60 265,150 300,230 295,320 330,345 380,380 410,395", "330,345 290,400 240,405 215,300", "585,992 585,1310", "585,1117 695,1117", "405,992 405,1090 395,1270",
  "585,1156 490,1156", "285,1272 455,1272 455,1309 614,1309 614,1455", "347,1272 347,1380 430,1500", "511,1309 511,1568", "436,1455 724,1455 724,1568", "585,1234 700,1234",
  "687,992 695,1117 696,1213 775,1213", "695,1213 708,1326 775,1326", "600,1472 792,1472", "310,1130 392,1115", "949,890 949,1045 1000,1130 1068,1155",
  "958,775 1040,780 1090,820 1180,850 1282,857 1282,900", "945,890 850,890 760,880", "715,992 780,1030 850,1085", "870,1285 870,1400 850,1470 800,1520",
  "915,1290 935,1290 935,1357 1003,1357", "935,1272 1070,1272", "1040,1155 1042,1245", "790,1526 900,1526", "806,1470 1003,1472", "400,550 395,640 340,660 290,660",
  "250,580 290,660 300,735", "310,755 340,800 370,850 410,900 470,940 495,945", "430,830 460,765 510,790 545,850 600,765", "690,1030 640,1160 695,1250",
];
const SOUTH_LAND =
  "285,200 283,290 293,340 310,390 330,440 345,465 375,480 390,520 405,550 410,590 435,630 440,640 418,635 450,660 462,700 475,730 500,762 497,740 480,700 460,640 440,600 425,548 440,545 455,590 475,630 500,660 520,700 545,740 565,780 565,830 600,865 640,890 700,935 735,920 770,970 815,980 850,1010 860,1060 900,1080 920,1115 940,1105 950,1085 975,1090 985,1110 975,1130 985,1180 985,1215 960,1260 940,1300 930,1350 925,1420 945,1470 965,1510 978,1560 1545,1560 1545,1355 1500,1350 1460,1320 1420,1300 1395,1300 1370,1330 1385,1300 1388,1250 1370,1200 1340,1160 1300,1155 1260,1125 1235,1095 1210,1075 1220,1055 1170,1060 1120,1050 1085,1030 1070,1060 1065,1080 1060,1050 1070,1015 1040,1030 1010,1045 1005,1085 985,1100 960,1075 940,1085 915,1085 890,1050 880,1010 893,960 890,930 850,935 825,930 825,880 840,810 830,795 790,810 785,850 770,870 730,880 700,860 685,800 680,740 685,660 700,630 740,595 790,600 800,610 815,600 800,585 850,578 880,590 900,610 905,655 930,705 940,700 940,660 920,590 920,540 960,490 1003,440 1000,380 1010,330 1030,290 1060,265 1060,200";
const SOUTH_ISLES = [
  "870,788 900,768 950,780 1000,820 1028,830 1000,837 975,830 960,800 920,785 885,785",
  "1040,832 1075,832 1110,850 1155,872 1110,888 1060,880 1025,872 1065,868",
  "955,880 985,875 995,884 970,888", "960,672 975,665 985,680", "970,710 978,735 968,728", "1215,920 1218,935 1212,930", "1200,1050 1225,1048 1222,1063 1203,1060",
  "770,1290 780,1300 790,1300 775,1312",
];
const SOUTH_LINES = [
  "390,520 425,517 425,523 480,553 522,553 522,542 550,542 575,580 598,612 608,592 625,595 655,660 685,692",
  "345,255 345,340 430,440 425,515", "511,402 511,553", "436,402 599,402 599,535 545,535 540,500", "599,414 724,414 733,508 775,508", "620,490 680,520 710,610",
  "775,460 890,457 1003,415", "775,460 780,560 820,562", "822,460 818,575", "868,460 870,570 915,572", "890,457 925,520 935,540", "733,508 735,570 745,595",
  "1070,1020 1055,1060 1070,1110 1125,1150 1125,1210 1140,1255 1175,1225 1220,1195 1235,1150 1225,1100", "1093,1250 1110,1280 1095,1380 1050,1390 1010,1290 960,1250",
  "1240,1170 1245,1230 1270,1260 1360,1235 1370,1200", "1305,1160 1305,1240", "1010,1290 960,1380 935,1385", "1095,1380 1040,1400 1030,1450 1060,1510 1130,1542",
  "1130,1400 1180,1460 1260,1440 1270,1500 1265,1542", "1165,1390 1240,1320 1290,1400 1390,1540", "775,900 805,900 805,925", "850,980 893,955", "1350,1320 1350,1450 1390,1500",
  "1400,1360 1400,1400 1450,1450 1480,1542", "1093,1500 1175,1500 1175,1542", "985,1100 1005,1120 1020,1180 1030,1210",
];

const LABELS: [string, number, number][] = [
  ["UNITED STATES", 637, 323], ["MEXICO", 644, 776], ["CUBA", 929, 764], ["DOMI", 1063, 847], ["REP", 1064, 867], ["JAMAICA", 980, 879],
  ["BELIZE", 811, 909], ["GUATEMALA", 795, 938], ["EL", 810, 969], ["LVAD", 808, 989], ["STA", 892, 1050], ["CA", 889, 1071], ["PANAMA", 925, 1098],
  ["VENEZUELA", 1148, 1111], ["SURINAME", 1297, 1198], ["COLOMBIA", 1034, 1227], ["ECUADOR", 951, 1321], ["PERU", 1015, 1444], ["CANADA", 526, -440],
];
const QUAKES: [number, number, string][] = [
  [434, 100, "M1-"], [459, 102, "M2-"], [447, 106, ""], [444, 111, "M2-"], [473, 171, ""], [480, 171, "M1-"], [473, 243, "M2-"], [461, 271, "M1-"], [464, 292, ""],
  [466, 295, "M2-"], [492, 332, "M1-"], [404, 404, ""], [409, 412, "M0-"], [677, 387, "M2-"], [653, 408, "M1-"], [678, 422, ""], [684, 432, ""], [694, 434, "M1-"],
  [668, 909, "M4-"], [844, 1026, "M4-"], [848, 1057, "M4-"], [1117, 857, ""], [1146, 861, ""], [1109, 879, "M2-"], [1139, 880, ""], [1134, 886, ""], [1137, 890, "M2-"], [1143, 906, "M2-"],
];
const qx = (x: number) => `${(x - 17.5) / 1.0889}px`;
const qy = (y: number) => `${445 + y / 1.6333}px`;

function speckle() {
  const r = rng(11);
  let d = "";
  for (let i = 0; i < 420; i++) {
    const x = 330 + r() * 400;
    const y = 60 + r() * 860;
    if (Math.abs(x - (420 + y * 0.27)) > 130) continue;
    const w = 2 + r() * 7;
    const h = 3 + r() * 14;
    d += `M${x.toFixed(0)} ${y.toFixed(0)}l${w.toFixed(1)} ${(-h).toFixed(1)}l${(-w * 0.3).toFixed(1)} ${(h * 1.4).toFixed(1)}z`;
  }
  for (let i = 0; i < 200; i++) {
    const x = 960 + r() * 230;
    const y = 420 + r() * 560;
    const w = 1 + r() * 5;
    const h = 3 + r() * 10;
    d += `M${x.toFixed(0)} ${y.toFixed(0)}l${w.toFixed(1)} ${(-h).toFixed(1)}l${(-w * 0.3).toFixed(1)} ${(h * 1.4).toFixed(1)}z`;
  }
  return d;
}
const SPECKLE = speckle();

function QuakeMap() {
  return (
    <div className="relative flex-1 overflow-hidden rounded-b-[9px] bg-[#262626]">
      <svg viewBox="0 0 1388 1389" preserveAspectRatio="none" className="absolute inset-0 size-full" strokeLinejoin="round">
        <g transform="translate(-17.45 -15) scale(0.91836 0.48473)">
          <path d={jag(NORTH_LAND, 0.12, 3, true, 3)} fill="#080808" />
          {NORTH_ISLES.map((s, i) => (
            <path key={i} d={jag(s, 0.14, 3, true, i + 4)} fill="#080808" />
          ))}
        </g>
        <g transform="translate(-17.45 445) scale(0.91836 0.61226)">
          <path d={jag(SOUTH_LAND, 0.1, 3, true, 9)} fill="#080808" />
          {SOUTH_ISLES.map((s, i) => (
            <path key={i} d={jag(s, 0.14, 2, true, i + 2)} fill="#080808" />
          ))}
        </g>
        <g transform="translate(-17.45 -15) scale(0.91836 0.48473)">
          {LAKES.map((s, i) => (
            <path key={i} d={jag(s, 0.16, 3, true, i + 30)} fill="#262626" />
          ))}
          <path d={SPECKLE} fill="#222" />
          {NORTH_LINES.map((s, i) => (
            <path key={i} d={jag(s, i < 6 ? 0 : 0.04, 3, false, i)} fill="none" stroke="#1c1c1c" strokeWidth="1.3" />
          ))}
          <path d="M305 990H715" stroke="#2b2b2b" strokeWidth="3" />
        </g>
        <g transform="translate(-17.45 445) scale(0.91836 0.61226)" fill="none">
          {SOUTH_LINES.map((s, i) => (
            <path key={i} d={jag(s, i === 0 ? 0.03 : 0.08, 3, false, i)} stroke={i === 0 ? "#2b2b2b" : "#1e1e1e"} strokeWidth="1.4" />
          ))}
        </g>
        <g stroke="#1b1b1b" strokeWidth="1.2">
          <path d="M96.5 0V1389M404 0V1389M711 0V1389M1018 0V1389M1324.5 0V1389M0 6H1388M0 314H1388M0 620H1388M0 927H1388M0 1234H1388" />
        </g>
      </svg>
      {LABELS.map(([t, x, y]) => (
        <span
          key={t}
          className="absolute -translate-x-1/2 -translate-y-1/2 font-['Inter',sans-serif] text-[15px] leading-none font-semibold whitespace-nowrap text-[#454545]"
          style={{ left: qx(x), top: qy(y) }}
        >
          {t}
        </span>
      ))}
      <div className="absolute top-[1220px] left-[238px] w-[100px] text-center font-['Inter',sans-serif] text-[20px] leading-[24px] font-medium tracking-[1.5px] text-[#454545] italic">
        Pacific
        <br />
        Ocean
      </div>
      <div className="absolute top-[1025px] left-[1367px] font-['Inter',sans-serif] text-[19px] leading-[24px] text-[#454545] italic">
        At
        <br />
        &nbsp;&nbsp;O
      </div>
      {QUAKES.map(([x, y, t], i) => (
        <span
          key={i}
          className="absolute flex size-[58px] -translate-x-1/2 -translate-y-1/2 items-center justify-center rounded-full border-[2.4px] border-[#03a9f4] bg-white font-['Liberation_Sans',sans-serif] text-[21.6px] leading-none text-[#555]"
          style={{ left: qx(x), top: qy(y) }}
        >
          {t}
        </span>
      ))}
      <div className="absolute top-[14px] left-[14px] flex w-[36px] flex-col overflow-hidden rounded-[3px] bg-white text-black">
        {["M12 6V18M6 12H18", "M7 12H17"].map((d, i) => (
          <svg key={d} viewBox="0 0 24 24" className={`h-[37px] w-full p-[6px] ${i === 0 ? "border-b border-[#ccc]" : ""}`} stroke="currentColor" strokeWidth="2.4">
            <path d={d} />
          </svg>
        ))}
      </div>
      <svg viewBox="0 0 24 24" className="absolute top-[100px] left-[18px] size-[28px]" fill="none" stroke="#fff" strokeWidth="2.2">
        <path d="M3 8.5V4.5A1.5 1.5 0 0 1 4.5 3H8.5M15.5 3H19.5A1.5 1.5 0 0 1 21 4.5V8.5M21 15.5V19.5A1.5 1.5 0 0 1 19.5 21H15.5M8.5 21H4.5A1.5 1.5 0 0 1 3 19.5V15.5" />
        <circle cx="12" cy="12" r="3.6" fill="#fff" stroke="none" />
      </svg>
      <div className="absolute right-0 bottom-0 flex h-[19px] items-center bg-white/70 px-[6px] font-['Liberation_Sans',sans-serif] text-[13.2px] leading-none whitespace-pre text-[#0078a8]">
        Leaflet<span className="text-[#333]"> | © </span>OpenStreetMap<span className="text-[#333]">, © </span>CARTO
      </div>
    </div>
  );
}

function Cone({ className, puff }: { className: string; puff?: boolean }) {
  return (
    <svg viewBox="0 0 14 16" className={`mx-px inline-block h-[16px] w-[14px] ${className}`}>
      <path d="M5 6H9L13.5 15.5H.5Z" fill="currentColor" stroke="#222" strokeWidth="0.7" />
      {puff && <path d="M5.5 6 4 1.5M8.5 6 10 1.5M7 6V2" stroke="currentColor" strokeWidth="1" />}
    </svg>
  );
}

function VolcanoFrame() {
  return (
    <div className="flex flex-1 flex-col pt-[6px] pr-[6px] pl-[7px] font-['DejaVu_Sans',sans-serif] text-[13px] text-black">
      <div className="flex flex-1 flex-col border-x border-t border-x-[#4b5a5f] border-t-[#b5222c] px-[6px] pt-[3px]">
        <div className="relative h-[84px] bg-white">
          <div className="flex h-[17px] items-center leading-none">
            <svg viewBox="0 0 80 16" className="mr-[5px] h-[16px] w-[80px]">
              <path d="M4 7H9L14 14H0Z" fill="#222" />
              <path d="M4 1 7 6 10 1" stroke="#d22" strokeWidth="1.5" fill="none" />
              <path d="M22 2V15M58 2V15" stroke="#888" />
              <path d="M29 8H50M33 5V11M36 3V13M39 6V10" stroke="#222" />
              <rect x="65" y="2" width="13" height="12" rx="3" fill="#c04878" />
              <rect x="69" y="5.5" width="5" height="5" fill="none" stroke="#fff" />
            </svg>
            <span className="text-[14.38px] font-bold">Interactive Map of Active Volcanoes and recent Earthquakes world-wide</span>
          </div>
          <div className="flex h-[19px] items-center leading-none whitespace-pre text-[#33c]">
            <b className="text-[#00c]">Volcanoes (hide)</b>
            <span className="text-black"> - </span>
            <Cone className="text-[#00dd22]" />
            all<span className="text-black"> - </span>
            <Cone className="text-[#ffee00]" puff />
            <b className="text-[#00c]">unrest</b>
            <span className="text-black"> - </span>
            <Cone className="text-[#ff9900]" puff />
            warning/minor activity<span className="text-black"> - </span>
            <Cone className="text-[#ee0000]" puff />
            eruption<span className="text-black"> | </span>
            <b className="text-[#00c]">News</b>
          </div>
          <div className="flex h-[18px] items-center leading-none whitespace-pre text-[#33c]">
            <b className="text-[#00c]">Quakes (hide)</b> all &gt;M3 <b className="text-[#00c]">&gt;M4</b> &gt;M5 &gt;M6 M7+<span className="text-black"> / </span>
            <b className="text-[#e00]">past 24h</b>
            <span className="text-black"> - </span>
            <span className="text-[#ff8000]">past 48h</span>
            <span className="text-black"> - </span>
            <span className="text-[#a0a000]">past week</span>
            <span className="text-black"> - </span>
            <span className="text-[#c8c850]">past 2 weeks</span>
            <span className="text-black"> / </span>Archive<span className="text-black"> | </span>
            <b className="text-[#00c]">List</b>
            <span className="ml-[7px] flex h-[17px] w-[328px] items-center justify-between border border-[#e8e8e8] px-[5px] font-['Liberation_Sans',sans-serif] text-[11px] text-[#222]">
              World
              <svg viewBox="0 0 10 8" className="mr-[3px] h-[8px] w-[9px]">
                <path d="M0 0H10L5 8Z" fill="#000" />
              </svg>
            </span>
          </div>
          <div className="mt-[2px] flex h-[26px] items-center bg-[#cacaca] pt-px pl-[2px] leading-none text-[#b5222c]">
            <b className="text-[12.5px]">News:</b>
            <span className="ml-[10px] text-[15px]">2 s _</span>
            <b className="ml-[697px]">x</b>
          </div>
          <div className="absolute top-[1px] right-[31px] flex h-[20px] w-[63px] items-center justify-center rounded-full border border-[#e79a20] bg-[linear-gradient(#ffd98a,#ffa928)] text-[11px] leading-none font-bold text-[#234] italic">Donate</div>
          <svg viewBox="0 0 20 24" className="absolute top-0 right-0 h-[20px] w-[19px]">
            <circle cx="12" cy="9" r="6.5" fill="#dfe8ff" stroke="#5577cc" strokeWidth="1.5" />
            <path d="M12 5.5V12.5M8.5 9H15.5" stroke="#3355bb" strokeWidth="1.5" />
            <path d="M8 14 2 22" stroke="#888" strokeWidth="3" />
          </svg>
          <div className="absolute top-[33px] right-[12px] text-[11px] leading-[14px] text-[#555]">Mon, 30 Mar 2020 23:44 UTC</div>
        </div>
        <div className="mt-[6px] flex h-[120px] gap-[7px] pl-[143px]">
          <div className="flex w-[574px] bg-white">
            <div className="relative flex-1 overflow-hidden pl-[8px]">
              <div className="pt-[6px] text-[11.9px] leading-[16px] font-bold">List of latest earthquakes worldwide</div>
              <div className="pt-[8px] text-[11.9px] leading-[16px] font-bold tracking-[-0.15px]">
                (<i>updated: 30 Mar, 20:39 UTC</i>) (only quakes &gt;=M1.8)
              </div>
              <div className="pt-[18px] pl-[3px] text-[11px] leading-[16px] font-bold text-[#0000e0]">Monday, 30 March 2020</div>
              <div className="flex pl-[3px] text-[11.9px] leading-[14px]">
                <div className="w-[95px] pt-[11px]">
                  Mon, 30 Mar
                  <br />
                  18:26:01 UTC
                </div>
                <div className="w-[80px] pt-[4px] leading-[15px]">
                  M 4.5 /<br />
                  10.0km -
                </div>
                <div className="w-[223px] pt-[19px] tracking-[-0.3px]">
                  Mid Indian Ridge - <span className="text-[#b5222c] underline">[I felt it]</span>
                </div>
                <div className="w-[76px] pt-[11px] text-[#0000e0] underline">
                  -13.75 /<br />
                  65.97
                </div>
                <div className="pt-[19px] text-[#0000e0] underline">GFZ</div>
              </div>
              <svg viewBox="0 0 20 24" className="absolute top-[27px] left-[394px] h-[22px] w-[18px]" stroke="#888" strokeWidth="3.4">
                <path d="M2 1 18 23M18 1 2 23" />
              </svg>
            </div>
            <div className="flex w-[25px] flex-col items-center bg-[#f1f1f1]">
              <svg viewBox="0 0 12 7" className="mt-[10px] h-[7px] w-[12px]">
                <path d="M6 0 12 7H0Z" fill="#a3a3a3" />
              </svg>
              <div className="mt-[8px] w-[21px] flex-1 bg-[#c1c1c1]" />
            </div>
          </div>
          <div className="relative flex-1 bg-[#dcdcdc]">
            <div className="absolute top-[12px] left-[12px] flex w-[40px] flex-col rounded-[4px] border-2 border-[#b4b4b4] bg-white">
              {["M12 6V18M6 12H18", "M7 12H17"].map((d, i) => (
                <svg key={d} viewBox="0 0 24 24" className={`h-[37px] w-full p-[6px] ${i === 0 ? "border-b border-[#ccc]" : ""}`} stroke="#000" strokeWidth="2.4">
                  <path d={d} />
                </svg>
              ))}
            </div>
            <div className="absolute top-[12px] right-[12px] flex flex-col items-end gap-[12px] font-['Liberation_Sans',sans-serif] text-[16px] text-[#a8a8a8]">
              <div className="flex h-[34px] w-[67px] items-center justify-center border-2 border-[#d0d0d0] bg-[#e2e2e2]">Sat/Ter</div>
              <div className="flex h-[34px] w-[61px] items-center justify-center border-2 border-[#d0d0d0] bg-[#e2e2e2]">Plates</div>
            </div>
          </div>
        </div>
      </div>
    </div>
  );
}

function Scrollbar() {
  return (
    <div className="relative flex w-[25px] shrink-0 flex-col items-center bg-[#f1f1f1]">
      <svg viewBox="0 0 12 7" className="mt-[10px] h-[7px] w-[12px]">
        <path d="M6 0 12 7H0Z" fill="#a3a3a3" />
      </svg>
      <div className="mt-[8px] h-[1365px] w-[21px] bg-[#c1c1c1]" />
      <svg viewBox="0 0 12 7" className="mt-auto mb-[9px] h-[7px] w-[12px]">
        <path d="M0 0H12L6 7Z" fill="#505050" />
      </svg>
    </div>
  );
}

export default function App() {
  return (
    <div className="relative flex h-[2160px] w-[3840px] overflow-hidden font-['Roboto',sans-serif]">
      <Backdrop />
      <Sidebar />
      <div className="relative flex min-w-0 flex-1 flex-col">
        <Header />
        <main className="flex min-h-0 flex-1 gap-[10px] overflow-hidden pt-[9.2px] pl-[8px]">
          <div className="flex w-[1389px] shrink-0 flex-col gap-[9.8px]">
            <WeatherCard />
            <Card className="h-[1134px] overflow-hidden">
              <Heading>Radar</Heading>
              <RadarMap />
            </Card>
            <RadioCard />
          </div>
          <div className="flex w-[922px] shrink-0 flex-col gap-[9.6px]">
            <Card className="h-[651px]">
              <Heading>Indoor Temps</Heading>
              <div className="flex flex-col gap-[7px] px-[19px]">
                <GraphCard icon="thermo" name="Entryway" value="68 °F" d="M0 56.6H525Q566 57 602 80Q650 106 700 106Q740 106 777 93Q805 83.5 840 83H884" />
                <GraphCard icon="thermo" name="Living Room" value="66 °F" d="M0 109.5H884" />
                <GraphCard icon="thermo" name="Kitchen" value="70 °F" d="M0 109.5H884" />
                <GraphCard icon="thermo" name="Dining Room" value="70 °F" d="M0 109.5H525Q562 109 600 84Q636 57 672 61Q710 64 755 78Q792 88.5 835 88.5H884" />
              </div>
            </Card>
            <Card className="h-[342.6px]">
              <Heading>Atmosphere</Heading>
              <div className="flex flex-col gap-[9.6px] px-[19px]">
                <Row icon="sunny" name="Dark Sky UV Index" value="2 UV index" />
                <Row icon="sunny" name="Dark Sky UV Index 0d" value="6 UV index" />
                <Row icon="eye" name="Dark Sky Ozone" value="325.9 DU" />
                <Row icon="eye" name="Dark Sky Ozone 0d" value="327.8 DU" />
              </div>
            </Card>
            <Card className="h-[553px]">
              <Heading>Outlook</Heading>
              <div className="flex flex-col px-[19px]">
                <Row icon="cloud" name="Dark Sky Summary" value="Overcast" left big />
                <div className="mt-[9.6px] mb-[7px]">
                  <Row icon="eye" name="Weather Details" value="Overcast for the hour." left />
                </div>
                <GraphCard left icon="water" name="Humidity" value="28 %" d="M0 56.3H525Q566 57 605 77Q640 92 677 92Q720 91 755 99Q800 109 833 109H884" />
                <div className="mt-[7px] mb-[9px]">
                  <GraphCard left icon="windy" name="Strong breeze" value="44 km/h" d="M0 109H525Q564 108 602 84Q642 56 682 55.8H884" />
                </div>
                <Row icon="pouring" name="Dark Sky Hourly Summary" value="Rain starting tomorrow morning." left big />
              </div>
            </Card>
          </div>
          <div className="flex w-[1388px] shrink-0 flex-col gap-[9.6px]">
            <Card className="h-[285.2px]">
              <Heading>Hazards</Heading>
              <div className="flex flex-col gap-[9.6px] px-[19px] pt-px">
                <Row icon="lightning" name="Dark Sky Nearest Storm Distance" value="9 mi" />
                <Row icon="hurricane" name="Sullivan" value="0 Alerts" />
                <Row icon="shades" name="UV Index" value="Low" />
              </div>
            </Card>
            <Card className="h-[1482px] overflow-hidden">
              <Heading>Earthquakes</Heading>
              <QuakeMap />
            </Card>
            <Card className="h-[400px] overflow-hidden">
              <Heading>Volcanos</Heading>
              <VolcanoFrame />
            </Card>
          </div>
        </main>
      </div>
      <Scrollbar />
      <div className="absolute top-[1932px] left-[3322px] z-10 font-['Open_Sans',sans-serif] whitespace-nowrap text-[#9a9a9a]/80">
        <div className="text-[28.6px] leading-[36px]">Activate Windows</div>
        <div className="text-[20.8px] leading-[34px]">Go to Settings to activate Windows.</div>
      </div>
    </div>
  );
}
